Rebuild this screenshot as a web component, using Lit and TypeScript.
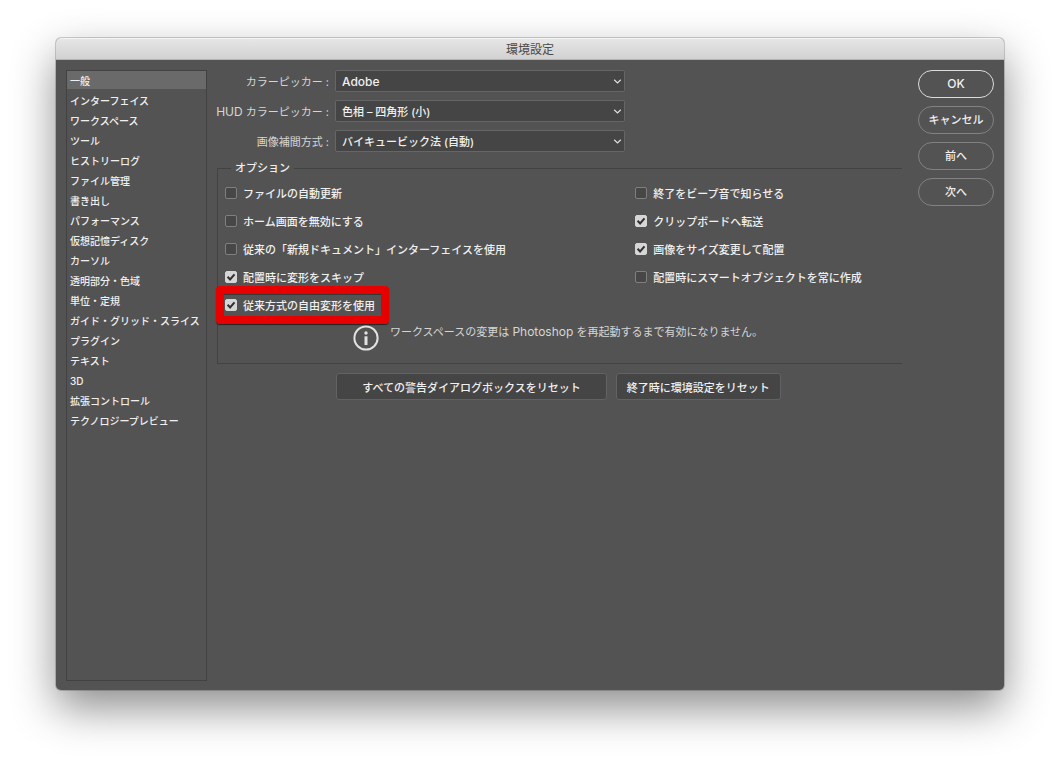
import { LitElement, html, css } from "lit";
import { customElement, state } from "lit/decorators.js";
import { classMap } from "lit/directives/class-map.js";

interface Option {
  id: string;
  label: string;
  checked: boolean;
  marked?: boolean;
}

const CATEGORIES = [
  "一般",
  "インターフェイス",
  "ワークスペース",
  "ツール",
  "ヒストリーログ",
  "ファイル管理",
  "書き出し",
  "パフォーマンス",
  "仮想記憶ディスク",
  "カーソル",
  "透明部分・色域",
  "単位・定規",
  "ガイド・グリッド・スライス",
  "プラグイン",
  "テキスト",
  "3D",
  "拡張コントロール",
  "テクノロジープレビュー",
];

const PICKERS = [
  { id: "picker", label: html`カラーピッカー :`, value: "Adobe", latin: true },
  {
    id: "hud",
    label: html`<span class="latin">HUD</span> カラーピッカー :`,
    value: "色相 – 四角形 (小)",
    latin: false,
  },
  { id: "interp", label: html`画像補間方式 :`, value: "バイキュービック法 (自動)", latin: false },
];

const LEFT: Option[] = [
  { id: "autoupdate", label: "ファイルの自動更新", checked: false },
  { id: "nohome", label: "ホーム画面を無効にする", checked: false },
  { id: "legacynew", label: "従来の「新規ドキュメント」インターフェイスを使用", checked: false },
  { id: "skip", label: "配置時に変形をスキップ", checked: true },
  { id: "legacyfree", label: "従来方式の自由変形を使用", checked: true, marked: true },
];

const RIGHT: Option[] = [
  { id: "beep", label: "終了をビープ音で知らせる", checked: false },
  { id: "clipboard", label: "クリップボードへ転送", checked: true },
  { id: "resize", label: "画像をサイズ変更して配置", checked: true },
  { id: "smart", label: "配置時にスマートオブジェクトを常に作成", checked: false },
];

const ACTIONS = ["OK", "キャンセル", "前へ", "次へ"];

@customElement("app-root")
export class AppRoot extends LitElement {
  @state() private selected = 0;

  static styles = css`
    :host {
      display: flex;
      box-sizing: border-box;
      min-height: 100vh;
      padding: 38px 56px 74px;
      background: #fff;
      color: #f0f0f0;
      font-family: Inter, "Noto Sans CJK JP", sans-serif;
      font-size: 11px;
      line-height: 16px;
    }
    * {
      box-sizing: border-box;
    }
    button,
    select,
    input {
      font: inherit;
      color: inherit;
      margin: 0;
    }
    .window {
      flex: 1;
      min-width: 0;
      display: flex;
      flex-direction: column;
      border-radius: 5px;
      background: #535353;
      box-shadow: 0 0 0 1px rgba(0, 0, 0, 0.18), 0 18px 44px rgba(0, 0, 0, 0.45);
    }
    .title {
      margin: 0;
      height: 22px;
      border-radius: 5px 5px 0 0;
      border-top: 1px solid #f4f4f4;
      border-bottom: 1px solid #b4b4b4;
      background: linear-gradient(#e6e6e6, #d1d1d1);
      color: #4a4a4a;
      font-size: 12px;
      font-weight: 400;
      line-height: 21px;
      text-align: center;
    }
    .body {
      flex: 1;
      display: grid;
      grid-template-columns: 141px minmax(0, 1fr) 76px;
      padding: 10px 10px 9px;
    }
    .categories {
      display: flex;
      flex-direction: column;
      gap: 2px;
      border: 1px solid #424242;
    }
    .category {
      height: 18px;
      padding: 2px 3px 0;
      border: 0;
      background: none;
      font-size: 10px;
      font-weight: 500;
      line-height: 16px;
      text-align: left;
      white-space: nowrap;
    }
    .category.selected {
      background: #6a6a6a;
    }
    .main {
      padding: 0 16px 0 8px;
    }
    .latin {
      font-size: 12px;
    }
    .pickers {
      display: grid;
      grid-template-columns: 114px minmax(0, 290px);
      gap: 8px 6px;
      align-items: center;
    }
    .picker-label {
      padding-top: 2px;
      color: #d6d6d6;
      text-align: right;
      white-space: nowrap;
    }
    .picker {
      position: relative;
      display: flex;
    }
    .select {
      appearance: none;
      width: 100%;
      height: 22px;
      padding: 2px 24px 0 6px;
      border: 1px solid #666;
      border-radius: 2px;
      background: #454545;
      font-weight: 500;
    }
    .select.latin {
      font-size: 12px;
    }
    .chevron {
      position: absolute;
      right: 3px;
      top: 8px;
      width: 9px;
      height: 7px;
      pointer-events: none;
    }
    .options {
      min-width: 0;
      margin: 8px 0 0 2px;
      padding: 0 0 12px;
      border: 1px solid #424242;
      border-right: 0;
    }
    .legend {
      margin-left: 13px;
      padding: 0 4px;
      font-weight: 500;
    }
    .columns {
      display: grid;
      grid-template-columns: minmax(0, 3fr) minmax(0, 2fr);
      gap: 10px;
      padding: 3px 0 0 7px;
    }
    .option {
      position: relative;
      display: flex;
      align-items: center;
      width: fit-content;
      height: 28px;
      gap: 6px;
      font-weight: 500;
      white-space: nowrap;
    }
    .option-text {
      padding-top: 2px;
    }
    .option.marked::after {
      content: "";
      position: absolute;
      inset: -5px -14px -5px -9px;
      border: 8px solid #e60000;
      border-radius: 4px;
      box-shadow: 0 1px 1px rgba(0, 0, 0, 0.6), inset 0 1px 0 rgba(0, 0, 0, 0.35);
      pointer-events: none;
    }
    .box {
      appearance: none;
      width: 12px;
      height: 12px;
      border: 1px solid #808080;
      border-radius: 2px;
      background: #474747;
    }
    .check {
      position: relative;
      display: flex;
    }
    .box:checked {
      border-color: #d6d6d6;
      background: #d6d6d6;
    }
    .tick {
      position: absolute;
      inset: 0;
      width: 12px;
      height: 12px;
      pointer-events: none;
      visibility: hidden;
    }
    .box:checked + .tick {
      visibility: visible;
    }
    .note {
      display: flex;
      justify-content: center;
      gap: 11px;
      padding: 6px 4px 0 0;
      color: #d6d6d6;
    }
    .info {
      width: 26px;
      height: 26px;
      flex: none;
    }
    .note-text {
      margin: 0;
      line-height: 14px;
    }
    .resets {
      display: flex;
      justify-content: center;
      gap: 9px;
      margin-top: 9px;
    }
    .reset {
      height: 27px;
      padding: 2px 10px 0;
      border: 1px solid #626262;
      border-radius: 3px;
      background: #454545;
      font-weight: 500;
      white-space: nowrap;
    }
    .reset.wide {
      padding: 2px 25px 0;
    }
    .actions {
      display: flex;
      flex-direction: column;
      gap: 8px;
    }
    .action {
      height: 28px;
      padding: 0;
      border: 1px solid #828282;
      border-radius: 14px;
      background: none;
      font-weight: 500;
    }
    .action.primary {
      border-color: #dcdcdc;
      font-size: 12px;
    }
  `;

  private renderOption(o: Option) {
    return html`
      <label class=${classMap({ option: true, marked: !!o.marked })} for=${o.id}>
        <span class="check">
          <input class="box" type="checkbox" id=${o.id} ?checked=${o.checked} />
          <svg class="tick" viewBox="0 0 12 12" aria-hidden="true">
            <path d="M2.6 5.8 5.1 8.5 9.5 3.4" fill="none" stroke="#303030" stroke-width="2" />
          </svg>
        </span>
        <span class="option-text">${o.label}</span>
      </label>
    `;
  }

  render() {
    return html`
      <section class="window">
        <h1 class="title">環境設定</h1>
        <div class="body">
          <nav class="categories">
            ${CATEGORIES.map(
              (name, i) => html`<button
                class=${classMap({ category: true, selected: i === this.selected })}
                @click=${() => (this.selected = i)}
              >${name}</button>`
            )}
          </nav>
          <main class="main">
            <div class="pickers">
              ${PICKERS.map(
                (p) => html`
                  <label class="picker-label" for=${p.id}>${p.label}</label>
                  <div class="picker">
                    <select class=${classMap({ select: true, latin: p.latin })} id=${p.id}>
                      <option>${p.value}</option>
                    </select>
                    <svg class="chevron" viewBox="0 0 9 7" aria-hidden="true">
                      <path d="M1.2 1.8 4.5 4.9 7.8 1.8" fill="none" stroke="#e0e0e0" stroke-width="1.2" />
                    </svg>
                  </div>
                `
              )}
            </div>
            <fieldset class="options">
              <legend class="legend">オプション</legend>
              <div class="columns">
                <div>${LEFT.map((o) => this.renderOption(o))}</div>
                <div>${RIGHT.map((o) => this.renderOption(o))}</div>
              </div>
              <div class="note">
                <svg class="info" viewBox="0 0 26 26" aria-hidden="true">
                  <circle cx="13" cy="13" r="11.6" fill="none" stroke="#e2e2e2" stroke-width="2" />
                  <circle cx="13" cy="8" r="1.7" fill="#e2e2e2" />
                  <rect x="11.5" y="11.3" width="3" height="8.7" fill="#e2e2e2" />
                </svg>
                <p class="note-text">ワークスペースの変更は <span class="latin">Photoshop</span> を再起動するまで有効になりません。</p>
              </div>
            </fieldset>
            <div class="resets">
              <button class="reset wide">すべての警告ダイアログボックスをリセット</button>
              <button class="reset">終了時に環境設定をリセット</button>
            </div>
          </main>
          <div class="actions">
            ${ACTIONS.map(
              (a, i) => html`<button class=${classMap({ action: true, primary: i === 0 })}>${a}</button>`
            )}
          </div>
        </div>
      </section>
    `;
  }
}
